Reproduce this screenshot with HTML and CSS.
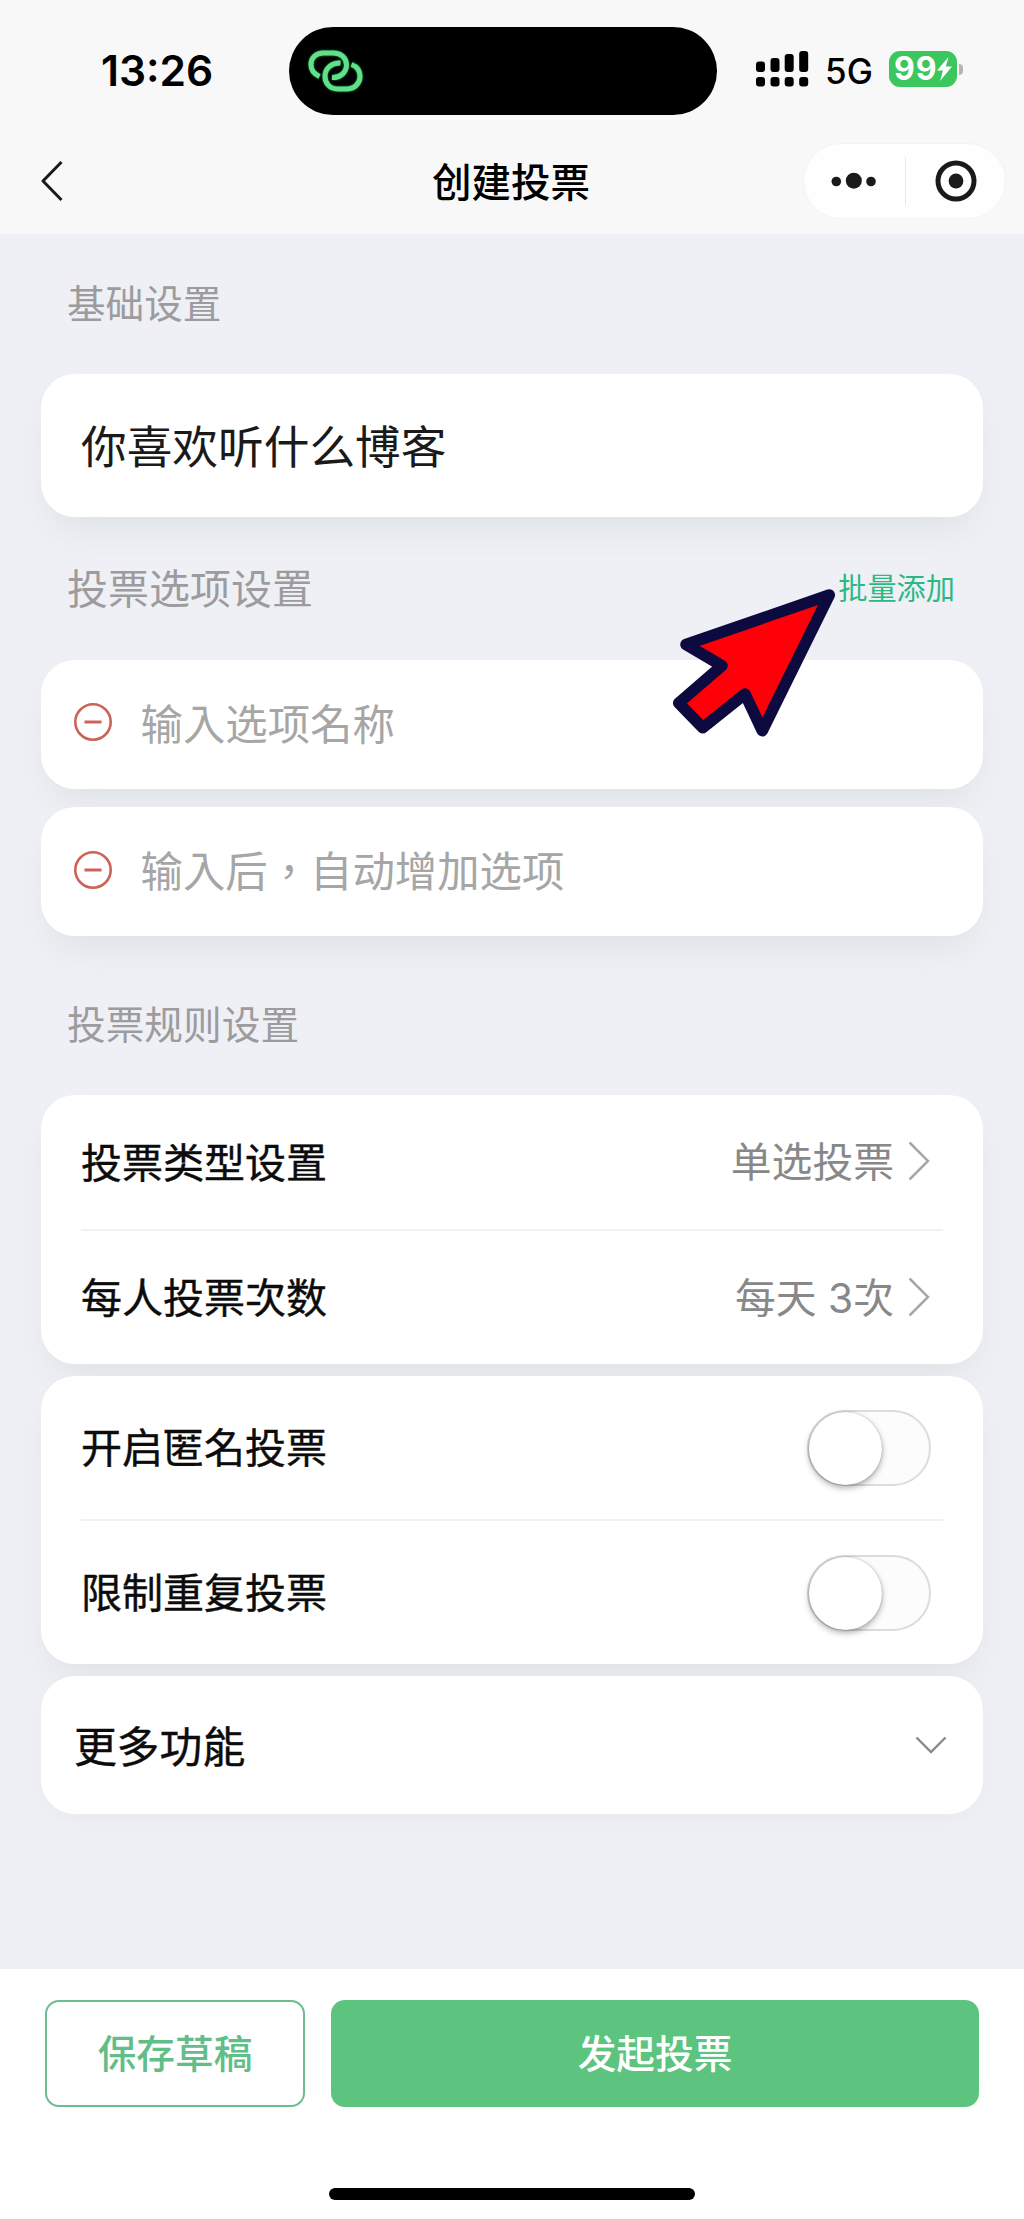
FILE: index.html
```html
<!DOCTYPE html>
<html lang="zh-Hant">
<head>
<meta charset="utf-8">
<title>创建投票</title>
<link rel="stylesheet" href="styles.css">
</head>
<body>
<div class="screen">
  <header class="top">
    <div class="status">
      <span class="time">13:26</span>
      <div class="island">
        <svg class="link" viewBox="0 0 56 44" fill="none" stroke="#5fe08a" stroke-width="5">
          <path d="M11.5 27.5C6 25 3 21 3 15.500C3 9 8 4 15 4H25.500C33 4 38.500 9 38.500 16C38.500 23.500 32 29 24 28.500"/>
          <path d="M32.500 14C24 13.500 17 19 17 27.500C17 34.500 22 40 29.500 40H38.500C46.500 40 52 34.500 52 27.500C52 21.500 49 17.500 43.500 15.500"/>
        </svg>
      </div>
      <svg class="signal" viewBox="0 0 53 36">
        <rect x="0" y="10.500" width="9" height="10.500" rx="3"/><rect x="14.500" y="7" width="9" height="14" rx="3"/><rect x="28.700" y="3" width="9" height="18" rx="3"/><rect x="43.200" y="0" width="9" height="21" rx="3"/>
        <rect x="0" y="26" width="9" height="9.500" rx="3"/><rect x="14.500" y="26" width="9" height="9.500" rx="3"/><rect x="28.700" y="26" width="9" height="9.500" rx="3"/><rect x="43.200" y="26" width="9" height="9.500" rx="3"/>
      </svg>
      <span class="network">5G</span>
      <div class="battery">
        <span class="level">99</span>
        <svg class="bolt" viewBox="0 0 15 24" fill="#fff"><path d="M11.500 0L0 13.500H6L3 24L15 9.500H8.800Z"/></svg>
      </div>
      <span class="nub"></span>
    </div>
    <nav class="nav">
      <svg class="back" viewBox="0 0 22 42" fill="none" stroke="#1a1a1a" stroke-width="3" stroke-linejoin="round"><path d="M20.500 2L2 21L20.500 40"/></svg>
      <h1 class="title">创建投票</h1>
      <div class="capsule">
        <svg class="dots" viewBox="0 0 46 18" fill="#1a1a1a"><circle cx="5.300" cy="9.500" r="4.800"/><circle cx="22.800" cy="8.700" r="8"/><circle cx="40" cy="9.500" r="4.800"/></svg>
        <span class="split"></span>
        <svg class="target" viewBox="0 0 42 42"><circle cx="21" cy="21" r="18" fill="none" stroke="#1a1a1a" stroke-width="5"/><circle cx="21" cy="21" r="7.400" fill="#1a1a1a"/></svg>
      </div>
    </nav>
  </header>

  <main class="content">
    <div class="heading heading-basic"><h2>基础设置</h2></div>
    <div class="card card-topic"><span class="topic">你喜欢听什么博客</span></div>

    <div class="heading heading-options">
      <h2>投票选项设置</h2>
      <a class="batch">批量添加</a>
      <svg class="pointer" viewBox="0 0 166 152"><path d="M156.300 9L13 58.500L49 79.700L5.700 117L29.700 141.700L72 108L89.300 144.700Z" fill="#ff0009" stroke="#0d0a3f" stroke-width="11.500" stroke-linejoin="round"/></svg>
    </div>
    <div class="options">
      <div class="card option">
        <svg class="minus" viewBox="0 0 40 40" fill="none" stroke="#cd6259" stroke-width="2.600"><circle cx="20" cy="20" r="17.700"/><path d="M11.500 20H28.500" stroke-width="3"/></svg>
        <span class="hint">输入选项名称</span>
      </div>
      <div class="card option">
        <svg class="minus" viewBox="0 0 40 40" fill="none" stroke="#cd6259" stroke-width="2.600"><circle cx="20" cy="20" r="17.700"/><path d="M11.500 20H28.500" stroke-width="3"/></svg>
        <span class="hint">输入后，自动增加选项</span>
      </div>
    </div>

    <div class="heading heading-rules"><h2>投票规则设置</h2></div>
    <div class="rules">
      <div class="card">
        <div class="row row-link">
          <span class="label">投票类型设置</span>
          <span class="value">单选投票</span>
          <svg class="next" viewBox="0 0 22 42" fill="none" stroke="#a8a8a8" stroke-width="2.500"><path d="M1.500 2.500L20 21L1.500 39.500"/></svg>
        </div>
        <div class="row row-link">
          <span class="label">每人投票次数</span>
          <span class="value">每天 3次</span>
          <svg class="next" viewBox="0 0 22 42" fill="none" stroke="#a8a8a8" stroke-width="2.500"><path d="M1.500 2.500L20 21L1.500 39.500"/></svg>
        </div>
      </div>
      <div class="card">
        <div class="row row-switch"><span class="label">开启匿名投票</span><span class="switch"><i class="knob"></i></span></div>
        <div class="row row-switch"><span class="label">限制重复投票</span><span class="switch"><i class="knob"></i></span></div>
      </div>
      <div class="card card-more">
        <span class="more">更多功能</span>
        <svg class="down" viewBox="0 0 32 18" fill="none" stroke="#8a8a8a" stroke-width="2.400"><path d="M1.500 1.500L16 16L30.500 1.500"/></svg>
      </div>
    </div>
  </main>

  <footer class="bottom">
    <div class="actions">
      <button class="btn btn-draft">保存草稿</button>
      <button class="btn btn-submit">发起投票</button>
    </div>
    <div class="home"></div>
  </footer>
</div>
</body>
</html>
```
FILE: styles.css
```css
* { box-sizing: border-box; }
body {
  margin: 0;
  font-family: "Noto Sans CJK TC", "Noto Sans CJK SC", sans-serif;
  background: #fff;
  color: #0c0c0c;
}
svg { display: block; flex: none; }
h1, h2 { margin: 0; font-weight: 400; }
span, h1, h2, a { white-space: nowrap; }

.screen {
  display: flex;
  flex-direction: column;
  width: 1024px;
  height: 2219px;
  overflow: hidden;
}

/* Status bar and navigation */
.top { height: 234px; background: #f8f8f8; }
.status {
  display: flex;
  align-items: center;
  height: 144px;
  padding: 0 61px 3px 101px;
  font-family: Inter, "Liberation Sans", sans-serif;
  color: #000;
}
.time { width: 188px; font-size: 42.500px; font-weight: 600; line-height: 50px; }
.island {
  display: flex;
  align-items: center;
  width: 428px;
  height: 88px;
  margin-right: 38.500px;
  padding-left: 19px;
  border-radius: 44px;
  background: #000;
}
.link { width: 56px; height: 44px; filter: drop-shadow(0 0 1px #1f9a45); }
.signal { width: 53px; height: 36px; margin-top: -3px; margin-right: 16.500px; }
.network { width: 64px; font-size: 35px; font-weight: 450; }
.battery {
  display: flex;
  align-items: center;
  width: 68px;
  height: 36px;
  margin-top: -3px;
  padding-left: 5px;
  border-radius: 11px;
  background: #3cc75e;
}
.level { width: 43px; font-size: 32px; font-weight: 650; line-height: 36px; letter-spacing: 1px; color: #fff; }
.bolt { width: 15px; height: 24px; }
.nub { width: 4px; height: 11px; margin: -3px 0 0 2px; border-radius: 0 5px 5px 0; background: #b5b5b5; }

.nav {
  display: grid;
  grid-template-columns: 391px 1fr 201px;
  align-items: center;
  height: 74px;
  padding: 0 19px 0 41px;
}
.back { width: 22px; height: 42px; }
.title { padding-bottom: 3px; font-size: 39.500px; font-weight: 500; line-height: 60px; color: #000; }
.capsule {
  display: flex;
  align-items: center;
  height: 74px;
  padding-left: 27px;
  border-radius: 37px;
  background: #fefefe;
  box-shadow: 0 0 0 1px #f3f3f3;
}
.dots { width: 46px; height: 18px; }
.split { width: 1px; height: 48px; margin: 0 29px 0 28px; background: #e8e8e8; }
.target { width: 42px; height: 42px; }

/* Form */
.content { flex: none; height: 1735px; padding: 0 41px; background: #eff0f5; }
.heading {
  display: flex;
  align-items: center;
  justify-content: space-between;
  position: relative;
  padding: 0 28px 0 26px;
  color: #9c9c9e;
}
.heading-basic { height: 140px; padding-bottom: 7px; }
.heading-basic h2 { font-size: 38.600px; }
.heading-options { height: 142.500px; padding-bottom: 5px; }
.heading-options h2 { font-size: 41px; }
.heading-rules { height: 159px; padding-top: 13px; }
.heading-rules h2 { font-size: 38.700px; }
.batch { font-size: 29.200px; color: #2ab883; }
.pointer { position: absolute; left: 632px; top: 69px; z-index: 2; width: 166px; height: 152px; }

.card { border-radius: 34px; background: #fff; box-shadow: 0 20px 36px -10px rgba(80, 110, 90, .11); }
.card-topic { display: flex; align-items: center; height: 143px; padding: 0 0 3px 40px; }
.topic { font-size: 45.700px; color: #1a1a1a; }

.options { display: flex; flex-direction: column; gap: 18.500px; }
.option {
  display: flex;
  align-items: center;
  gap: 28px;
  height: 129px;
  padding: 0 0 4px 31.500px;
  font-size: 42.400px;
  color: #a6a6a6;
}
.minus { width: 40px; height: 40px; }
.hint { padding-bottom: 2px; }

.rules { display: flex; flex-direction: column; gap: 12px; }
.row { display: flex; align-items: center; margin: 0 40px; }
.row + .row { border-top: 2px solid #f1f1f2; }
.label { flex: 1; padding-bottom: 5px; font-size: 41px; -webkit-text-stroke: .4px currentColor; }
.row-link { height: 134px; padding-right: 13px; }
.row-link + .row-link { height: 135px; }
.value { margin-right: 14px; padding-bottom: 5px; font-family: Inter, "Noto Sans CJK TC", sans-serif; font-size: 40.800px; color: #888; }
.next { width: 22px; height: 42px; margin-top: -2px; }
.row-switch { height: 143px; padding-right: 12px; }
.row-switch + .row-switch { height: 145px; }
.switch {
  width: 124px;
  height: 76px;
  border: 2px solid #dcdcdc;
  border-radius: 38px;
  background: #fcfcfc;
}
.knob {
  display: block;
  width: 73px;
  height: 73px;
  border-radius: 50%;
  background: #fff;
  box-shadow: 0 3px 6px rgba(0, 0, 0, .32), 0 0 2px rgba(0, 0, 0, .25);
}
.card-more {
  display: flex;
  align-items: center;
  justify-content: space-between;
  height: 138px;
  padding: 0 36px 0 33px;
  box-shadow: 0 8px 16px rgba(90, 120, 110, .04);
}
.more { padding-bottom: 2px; font-size: 42.800px; -webkit-text-stroke: .4px currentColor; }
.down { width: 32px; height: 18px; }

/* Bottom actions */
.bottom { height: 250px; background: #fff; }
.actions { display: flex; gap: 26px; padding: 31px 45px 0 45px; }
.btn {
  height: 107px;
  padding: 0 0 6px;
  border: 0;
  border-radius: 14px;
  font: 500 38.700px "Noto Sans CJK TC", "Noto Sans CJK SC", sans-serif;
}
.btn-draft { width: 260px; border: 2.500px solid #6cbd8f; background: #fff; color: #62be88; }
.btn-submit { flex: 1; background: #5cc47f; color: #fff; }
.home { width: 366px; height: 12px; margin: 81px auto 0; border-radius: 6px; background: #000; }
```
